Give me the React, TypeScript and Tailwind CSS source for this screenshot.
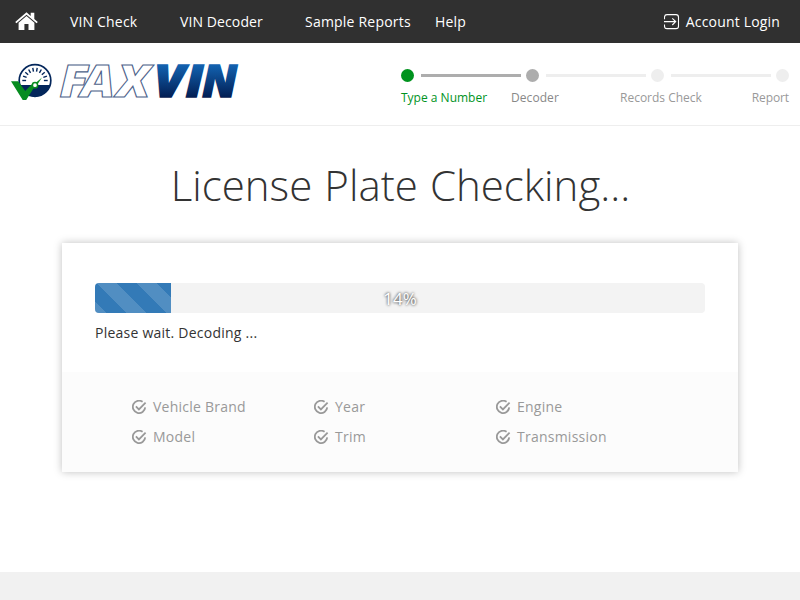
import React from "react";

const columns = [
  ["Vehicle Brand", "Model"],
  ["Year", "Trim"],
  ["Engine", "Transmission"],
];

const ticks = [-90, -70, -50, -30, -10, 10, 30, 50, 70, 90];

function HomeIcon() {
  return (
    <svg width="23" height="19" viewBox="0 0 23 19" className="block" fill="#fff">
      <path d="M11.5 0.3 L15.7 3.9 V0.8 H19.3 V7 L22.8 10 L21.6 11.3 L11.5 2.7 L1.4 11.3 L0.2 10 Z" />
      <path d="M11.5 4.1 L19.4 10.8 V18 H13.5 V12 H9.4 V18 H3.6 V10.8 Z" />
    </svg>
  );
}

function LoginIcon() {
  return (
    <svg width="16" height="16" viewBox="0 0 16 16" className="block" fill="none" stroke="#fff" strokeWidth="1.1">
      <path d="M0.5 5.2 V3.2 Q0.5 0.6 3 0.6 H12 Q14.5 0.6 14.5 3.2 V12.2 Q14.5 14.6 12 14.6 H3 Q0.5 14.6 0.5 12.2 V10.4" />
      <path d="M0 7.6 H11.5 M8.3 4.3 L11.7 7.6 L8.3 11" />
    </svg>
  );
}

function CheckIcon() {
  return (
    <svg width="15" height="15" viewBox="0 0 15 15" className="block shrink-0" fill="none" stroke="#999" strokeWidth="1.8">
      <path d="M10.6 1.8 A6.2 6.2 0 1 0 13.2 7.4" />
      <path d="M3.9 6.4 L6.9 9.4 L13.6 2.7" />
    </svg>
  );
}

function Logo() {
  return (
    <svg width="240" height="76" viewBox="0 0 240 76" className="block">
      <defs>
        <linearGradient id="vin" x1="0" y1="22" x2="0" y2="55" gradientUnits="userSpaceOnUse">
          <stop offset="0" stopColor="#1262b0" />
          <stop offset="1" stopColor="#021d52" />
        </linearGradient>
      </defs>
      <g transform="translate(0 20)">
        <circle cx="25" cy="17.5" r="15.8" fill="#fff" stroke="#03265b" strokeWidth="1.7" />
        <path d="M9.5 22 H40.5 A16.2 16.2 0 0 1 9.5 22 Z" fill="#03265b" />
        {ticks.map((angle) => (
          <path key={angle} d="M25 4.8 V8.6" stroke="#03265b" strokeWidth="1.4" transform={`rotate(${angle} 25 17.5)`} />
        ))}
        <path d="M1 18.2 H8.2 L15.2 28 L22.5 20.4 L24.4 24 L16.2 37 H12.7 Z" fill="#078c20" />
        <path d="M25.5 20 L32 14.4 L27.4 21.5 Z" fill="#078c20" />
        <circle cx="25" cy="22.2" r="2.6" fill="#fff" stroke="#078c20" strokeWidth="1.5" />
      </g>
      <g fontFamily="Open Sans" fontWeight="800" fontStyle="italic" fontSize="45">
        <text transform="scale(1.13 1)" x="43.8 62.6 94.2" y="54.3" fill="#fff" stroke="#4c6189" strokeWidth="1">
          FAX
        </text>
        <g fill="url(#vin)" stroke="url(#vin)" strokeWidth="1.6" fontSize="44">
          <text transform="scale(1.13 1)" x="127.6 155.6" y="54.3">
            VI
          </text>
          <text x="192.3" y="54.3">N</text>
        </g>
      </g>
    </svg>
  );
}

export default function App() {
  return (
    <div className="flex h-[600px] w-[800px] flex-col overflow-hidden bg-white font-['Open_Sans',sans-serif] text-sm text-[#333]">
      <nav className="flex h-[43px] shrink-0 items-center bg-[#303030] leading-5 tracking-[0.17px] text-white">
        <a className="ml-[15px] w-[55px]"><HomeIcon /></a>
        <a className="w-[110px]">VIN Check</a>
        <a className="w-[125px] tracking-[0.1px]">VIN Decoder</a>
        <a className="w-[130px] tracking-[0.21px]">Sample Reports</a>
        <a>Help</a>
        <a className="mr-5 ml-auto flex items-center gap-1.5"><LoginIcon />Account Login</a>
      </nav>

      <header className="flex h-[83px] shrink-0 justify-between border-b border-[#eee] pr-[11px] pl-[10px]">
        <Logo />
        <div className="w-[388px] pt-[26px]">
          <div className="flex items-center">
            <i className="size-[13px] rounded-full bg-[#00931e]" />
            <i className="mr-[5px] ml-[7px] h-[3px] w-[100px] bg-[#adadad]" />
            <i className="size-[13px] rounded-full bg-[#adadad]" />
            <i className="mr-[5px] ml-[7px] h-[3px] w-[100px] bg-[#eee]" />
            <i className="size-[13px] rounded-full bg-[#eee]" />
            <i className="mr-[5px] ml-[7px] h-[3px] w-[100px] bg-[#eee]" />
            <i className="size-[13px] rounded-full bg-[#eee]" />
          </div>
          <div className="mt-[7px] flex text-xs leading-[17px] whitespace-nowrap text-[#999]">
            <span className="w-[110px] text-[#00931e]">Type a Number</span>
            <span className="w-[109px] tracking-[0.07px] text-[#888]">Decoder</span>
            <span>Records Check</span>
            <span className="ml-auto tracking-[-0.1px]">Report</span>
          </div>
        </div>
      </header>

      <main className="h-[446px] shrink-0">
        <h1 className="pt-[34px] pl-px text-center text-[42px] leading-[50px] font-light [word-spacing:1.2px]">License Plate Checking...</h1>
        <section className="mx-[62px] mt-[33px] h-[229px] bg-white shadow-[0_0_8px_rgba(0,0,0,0.25)]">
          <div className="h-[129px] px-[33px] pt-10">
            <div className="relative h-[30px] overflow-hidden rounded bg-[#f3f3f3]">
              <div className="h-full w-[76px] bg-[#337ab7] bg-[linear-gradient(45deg,rgba(255,255,255,.15)_25%,transparent_25%,transparent_50%,rgba(255,255,255,.15)_50%,rgba(255,255,255,.15)_75%,transparent_75%,transparent)] bg-[size:40px_40px] bg-[position:2px_0]" />
              <span className="absolute inset-0 text-center text-[17px] leading-8 text-white [text-shadow:0_0_3px_#000]">14%</span>
            </div>
            <p className="mt-[10px] leading-5 tracking-[0.24px]">Please wait. Decoding ...</p>
          </div>
          <div className="flex h-[100px] bg-[#fcfcfc] pt-5 pl-[70px] tracking-[0.24px] text-[#999]">
            {columns.map((items) => (
              <ul key={items[0]} className="w-[182px]">
                {items.map((item) => (
                  <li key={item} className="flex h-[30px] items-center gap-1.5"><CheckIcon />{item}</li>
                ))}
              </ul>
            ))}
          </div>
        </section>
      </main>
      <footer className="h-7 shrink-0 bg-[#f1f1f1]" />
    </div>
  );
}
